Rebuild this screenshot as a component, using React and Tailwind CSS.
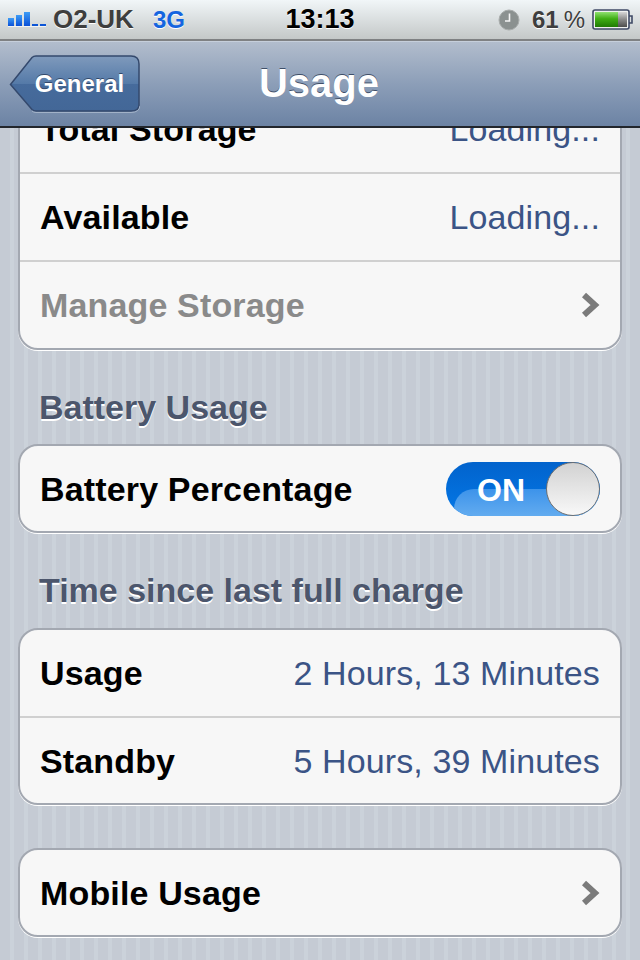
const font = "font-['Liberation_Sans',Arial,sans-serif]";

function Chevron() {
  return (
    <svg width="20" height="28" viewBox="0 0 20 28" className="block">
      <path d="M4 4 L15 14 L4 24" fill="none" stroke="#7b7b7b" strokeWidth="6" />
    </svg>
  );
}

function Signal() {
  const bars = [
    { x: 0, h: 8 }, { x: 8, h: 11 }, { x: 16, h: 14 }, { x: 24, h: 2 }, { x: 32, h: 2 },
  ];
  return (
    <svg width="38" height="16" viewBox="0 0 38 16" className="block">
      <defs>
        <linearGradient id="sig" x1="0" y1="0" x2="0" y2="1">
          <stop offset="0" stopColor="#3d9cf5" />
          <stop offset="1" stopColor="#0a50d8" />
        </linearGradient>
      </defs>
      {bars.map((b) => (
        <rect key={b.x} x={b.x} y={14 - b.h} width="6" height={b.h} fill={b.h > 2 ? "url(#sig)" : "#0c55d6"} />
      ))}
      <rect x="0" y="14" width="38" height="1" fill="#fff" opacity="0.7" />
    </svg>
  );
}

function Clock() {
  return (
    <svg width="22" height="22" viewBox="0 0 22 22" className="block">
      <circle cx="11" cy="11" r="10" fill="#8b9190" stroke="#a9adac" strokeWidth="1" />
      <path d="M11.5 4.5 V12 H7" fill="none" stroke="#f4f4f4" strokeWidth="1.6" />
    </svg>
  );
}

function Battery() {
  return (
    <svg width="42" height="22" viewBox="0 0 42 22" className="block">
      <defs>
        <linearGradient id="bg" x1="0" y1="0" x2="0" y2="1">
          <stop offset="0" stopColor="#8fe070" />
          <stop offset="0.45" stopColor="#3fae14" />
          <stop offset="1" stopColor="#1f7a04" />
        </linearGradient>
        <linearGradient id="em" x1="0" y1="0" x2="0" y2="1">
          <stop offset="0" stopColor="#d6d6d6" />
          <stop offset="0.5" stopColor="#8a8a8a" />
          <stop offset="1" stopColor="#4d4d4d" />
        </linearGradient>
      </defs>
      <rect x="1" y="1" width="36" height="19" rx="2" fill="#eef0ef" stroke="#3f4a66" strokeWidth="1.6" />
      <rect x="3" y="3" width="23" height="15" fill="url(#bg)" />
      <rect x="26" y="3" width="9" height="15" fill="url(#em)" />
      <path d="M37 7 H40 V14 H37" fill="none" stroke="#3f4a66" strokeWidth="1.6" />
    </svg>
  );
}

function StatusBar() {
  return (
    <div className="relative h-[41px] shrink-0 flex items-center border-b-2 border-[#7f8183] bg-gradient-to-b from-[#f1f6f8] to-[#c4c8c8] pl-2 pr-[6px]">
      <Signal />
      <span className="ml-[7px] text-[26px] font-bold text-[#3e3e3e] [text-shadow:0_1px_0_#fff]">O2-UK</span>
      <span className="ml-[19px] text-[24px] font-bold text-[#1565e0] [text-shadow:0_1px_0_#fff]">3G</span>
      <span className="absolute left-0 right-0 text-center text-[27px] font-bold text-black [text-shadow:0_1px_0_#fff]">13:13</span>
      <div className="ml-auto flex items-center">
        <Clock />
        <span className="ml-[12px] text-[24px] font-bold text-[#3e3e3e] [text-shadow:0_1px_0_#fff]">61</span>
        <span className="ml-[5px] mr-[7px] text-[24px] text-[#3e3e3e] [text-shadow:0_1px_0_#fff]">%</span>
        <Battery />
      </div>
    </div>
  );
}

function BackButton() {
  return (
    <div className="relative w-[131px] h-[59px] ml-[9px] flex items-center justify-center">
      <svg width="131" height="59" viewBox="0 0 131 59" className="absolute inset-0">
        <defs>
          <linearGradient id="back" x1="0" y1="0" x2="0" y2="1">
            <stop offset="0" stopColor="#7f9abc" />
            <stop offset="0.5" stopColor="#557aa8" />
            <stop offset="0.5" stopColor="#466b9c" />
            <stop offset="1" stopColor="#436797" />
          </linearGradient>
        </defs>
        <path
          d="M1.5 29.5 L23 2.5 Q24.5 1 27 1 H122 Q130 1 130 9 V50 Q130 56 122 56 H27 Q24.5 56 23 54.5 Z"
          fill="url(#back)"
          stroke="#34496d"
          strokeWidth="1.5"
        />
        <path d="M23 56 Q24.5 57.5 27 57.5 H122 Q130 57.5 131 51" fill="none" stroke="#a2b2c8" strokeWidth="1" />
      </svg>
      <span className="relative pl-[10px] text-[24px] font-bold text-white [text-shadow:0_-1px_0_#33496b]">General</span>
    </div>
  );
}

function NavBar() {
  return (
    <div className="relative z-10 h-[87px] shrink-0 flex items-center border-t border-[#c6cfdb] border-b-2 border-b-[#22262c] bg-gradient-to-b from-[#b2bdcd] via-[#8c9eb8] to-[#6c83a4]">
      <BackButton />
      <span className="absolute left-0 right-[2px] text-center text-[40px] leading-[44px] -mt-[2px] font-bold text-white [text-shadow:0_-1px_0_#3f4f68]">Usage</span>
    </div>
  );
}

function Card({ children, className = "" }) {
  return (
    <div className={`mx-[18px] rounded-[20px] border-2 border-[#a3a8b1] bg-[#f7f7f7] shadow-[0_1px_0_#fff] overflow-hidden ${className}`}>
      {children}
    </div>
  );
}

function Row({ label, value, dim, chevron, last, height = "h-[85px]" }) {
  return (
    <div className={`flex items-center justify-between px-5 ${last ? height : "h-[88px] border-b-2 border-[#d0d0d0]"}`}>
      <span className={`text-[34px] leading-[40px] tracking-[0.15px] font-bold ${dim ? "text-[#8a8a8a]" : "text-black"}`}>{label}</span>
      {value && <span className="text-[34px] leading-[40px] tracking-[0.12px] text-[#3b5486]">{value}</span>}
      {chevron && <Chevron />}
    </div>
  );
}

function Heading({ children, className = "" }) {
  return (
    <div className={`pl-[39px] text-[34px] leading-[36px] font-bold text-[#4c566c] [text-shadow:0_2px_0_#fff] ${className}`}>
      {children}
    </div>
  );
}

function Toggle() {
  return (
    <div className="relative w-[154px] h-[54px] rounded-full overflow-hidden bg-gradient-to-b from-[#0263cc] to-[#0478e8]">
      <div className="absolute left-[8px] top-[27px] w-[150px] h-[30px] rounded-tl-[20px] bg-gradient-to-b from-[#3c93ea] to-[#66aef0]" />
      <span className="absolute left-[31px] top-[10px] text-[32px] leading-[36px] font-bold text-white">ON</span>
      <div className="absolute right-0 top-0 w-[54px] h-[54px] rounded-full border-[1.5px] border-[#6f6f6f] bg-gradient-to-b from-[#d2d2d2] to-[#f8f8f8]" />
    </div>
  );
}

export default function App() {
  return (
    <div className={`w-[640px] h-[960px] flex flex-col overflow-hidden ${font}`}>
      <StatusBar />
      <NavBar />
      <div className="flex-1 overflow-hidden bg-[#c6ccd5] bg-[repeating-linear-gradient(90deg,#c5cbd4_0,#c5cbd4_10px,#cbd2da_10px,#cbd2da_14px)]">
        <Card className="-mt-[44px]">
          <Row label="Total Storage" value="Loading..." />
          <Row label="Available" value="Loading..." />
          <Row label="Manage Storage" dim chevron last height="h-[86px]" />
        </Card>
        <Heading className="mt-[39px]">Battery Usage</Heading>
        <Card className="mt-[19px]">
          <div className="h-[85px] flex items-center justify-between px-5">
            <span className="text-[34px] leading-[40px] tracking-[0.15px] font-bold text-black">Battery Percentage</span>
            <Toggle />
          </div>
        </Card>
        <Heading className="mt-[39px]">Time since last full charge</Heading>
        <Card className="mt-[20px]">
          <Row label="Usage" value="2 Hours, 13 Minutes" />
          <Row label="Standby" value="5 Hours, 39 Minutes" last />
        </Card>
        <Card className="mt-[43px]">
          <Row label="Mobile Usage" chevron last />
        </Card>
      </div>
    </div>
  );
}
